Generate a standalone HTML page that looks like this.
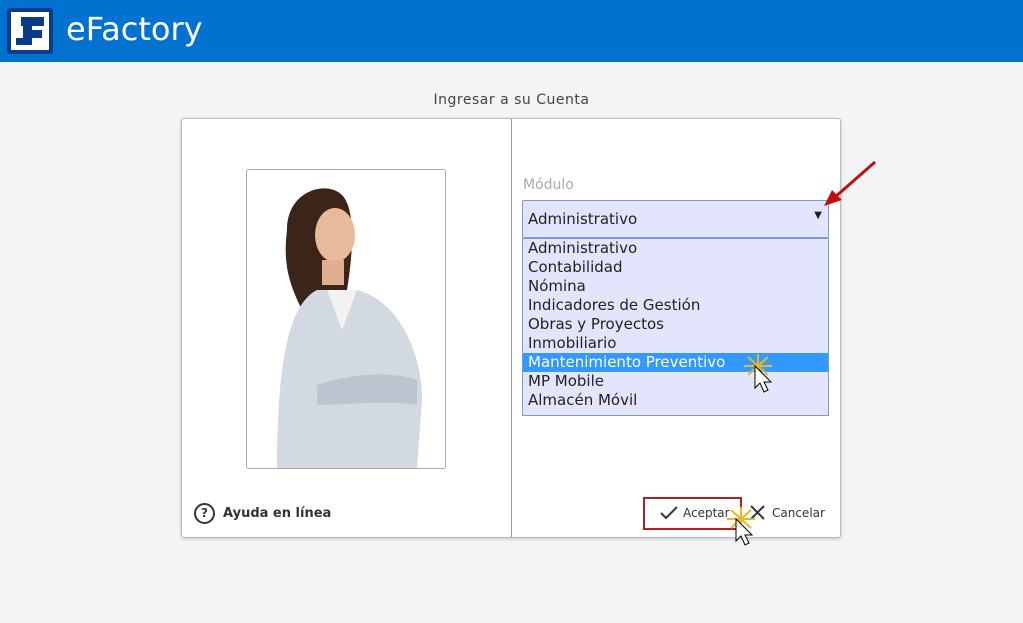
<!DOCTYPE html><html><head><meta charset="utf-8"><style>
body{margin:0;width:1023px;height:623px;background:#f3f4f6;font-family:Verdana,"DejaVu Sans",sans-serif;position:relative;overflow:hidden}
.hdr{position:absolute;left:0;top:0;width:1023px;height:62px;background:#0272d0}
.logo{position:absolute;left:7px;top:8px;width:46px;height:46px;background:#0a3a8c;border-radius:3px}
.logo .in{position:absolute;left:4px;top:4px;width:38px;height:38px;background:#fff}
.ttl{position:absolute;left:66px;top:10px;color:#fff;font-size:32px;font-family:"DejaVu Sans",sans-serif}
.cap{position:absolute;left:0;width:1023px;top:92px;text-align:center;font-size:14px;color:#444;letter-spacing:.5px}
.card{position:absolute;left:181px;top:118px;width:658px;height:418px;background:#fff;border:1px solid #bbb;border-radius:3px;box-shadow:0 1px 3px rgba(0,0,0,.2)}
.div{position:absolute;left:329px;top:0;width:1px;height:418px;background:#999}
.photo{position:absolute;left:64px;top:50px;width:198px;height:298px;border:1px solid #aaa;border-radius:3px;overflow:hidden;background:#fff}
.abs{position:absolute}
.lbl{left:341px;top:58px;color:#aaa;font-size:14px}
.sel{left:340px;top:81px;width:305px;height:36px;background:#e3e5fc;border:1px solid #7a9ad8;border-radius:2px;font-size:15px;color:#222}
.list{left:340px;top:119px;width:305px;height:176px;background:#e3e5fc;border:1px solid #7a9ad8;font-size:15px;color:#222}
.list div{height:19px;line-height:19px;padding-left:5px}
.list .hi{background:#3399ff;color:#fff}
</style></head><body>
<div class="hdr"><div class="logo"><div class="in"><svg width="38" height="38"><path d="M10 5H33V14H21V18H31V26H21V33H5V26H12V14H10Z" fill="#0a3a8c"/></svg></div></div><div class="ttl">eFactory</div></div>
<div class="cap">Ingresar a su Cuenta</div>
<div class="card"><div class="div"></div>
<div class="photo"><svg width="198" height="298">
<path d="M40 60C40 20 80 10 95 25C110 40 105 90 100 120L60 150C45 120 35 100 40 60Z" fill="#3b2418"/>
<ellipse cx="88" cy="65" rx="20" ry="27" fill="#e8b99a"/>
<path d="M75 90h22v25H75z" fill="#e0af92"/>
<path d="M30 298C30 200 40 135 70 120L110 120C150 130 175 180 175 230L170 298Z" fill="#d3d9e0"/>
<path d="M80 120L95 160L110 120Z" fill="#f2f2f2"/>
<path d="M70 215C100 205 140 200 170 210L170 235C140 230 100 235 70 235Z" fill="#bcc5cf"/>
</svg></div>
<div class="abs" style="left:12px;top:384px;font-size:13px;font-weight:bold;color:#333"><span style="display:inline-block;width:17px;height:17px;border:2px solid #333;border-radius:50%;text-align:center;line-height:17px;font-size:12px;margin-right:8px;vertical-align:middle">?</span>Ayuda en línea</div>
<div class="abs lbl">Módulo</div>
<div class="abs sel"><span style="position:absolute;left:5px;top:9px">Administrativo</span><span style="position:absolute;right:6px;top:9px;font-size:10px">▼</span></div>
<div class="abs list"><div>Administrativo</div><div>Contabilidad</div><div>Nómina</div><div>Indicadores de Gestión</div><div>Obras y Proyectos</div><div>Inmobiliario</div><div class="hi">Mantenimiento Preventivo</div><div>MP Mobile</div><div>Almacén Móvil</div></div>
<div class="abs" style="left:461px;top:378px;width:95px;height:29px;border:2px solid #b02025"></div>
<svg class="abs" style="left:477px;top:386px" width="20" height="16"><path d="M2 8L7 13L18 2" stroke="#333" stroke-width="2" fill="none"/></svg>
<div class="abs" style="left:501px;top:387px;font-size:12px;color:#333">Aceptar</div>
<svg class="abs" style="left:567px;top:385px" width="17" height="17"><path d="M2 2L15 15M15 2L2 15" stroke="#333" stroke-width="2"/></svg>
<div class="abs" style="left:590px;top:387px;font-size:12px;color:#333">Cancelar</div>
</div>
<svg class="abs" style="left:820px;top:158px" width="60" height="55"><path d="M55 4L14 40" stroke="#c01010" stroke-width="3"/><path d="M4 48L12 32L22 42Z" fill="#c01010"/></svg>
<svg class="abs" style="left:742px;top:354px" width="35" height="42"><path d="M2 12L30 12M16 0L16 24M6 3L26 21M26 3L6 21" stroke="#e8b820" stroke-width="2"/><path d="M13 12L13 34L18 29L22 38L26 36L22 28L29 28Z" fill="#fff" stroke="#000"/></svg>
<svg class="abs" style="left:725px;top:505px" width="35" height="42"><path d="M2 14L30 14M16 2L16 26M6 5L26 23M26 5L6 23" stroke="#e8b820" stroke-width="2"/><path d="M11 14L11 36L16 31L20 40L24 38L20 30L27 30Z" fill="#fff" stroke="#000"/></svg>
</body></html>
